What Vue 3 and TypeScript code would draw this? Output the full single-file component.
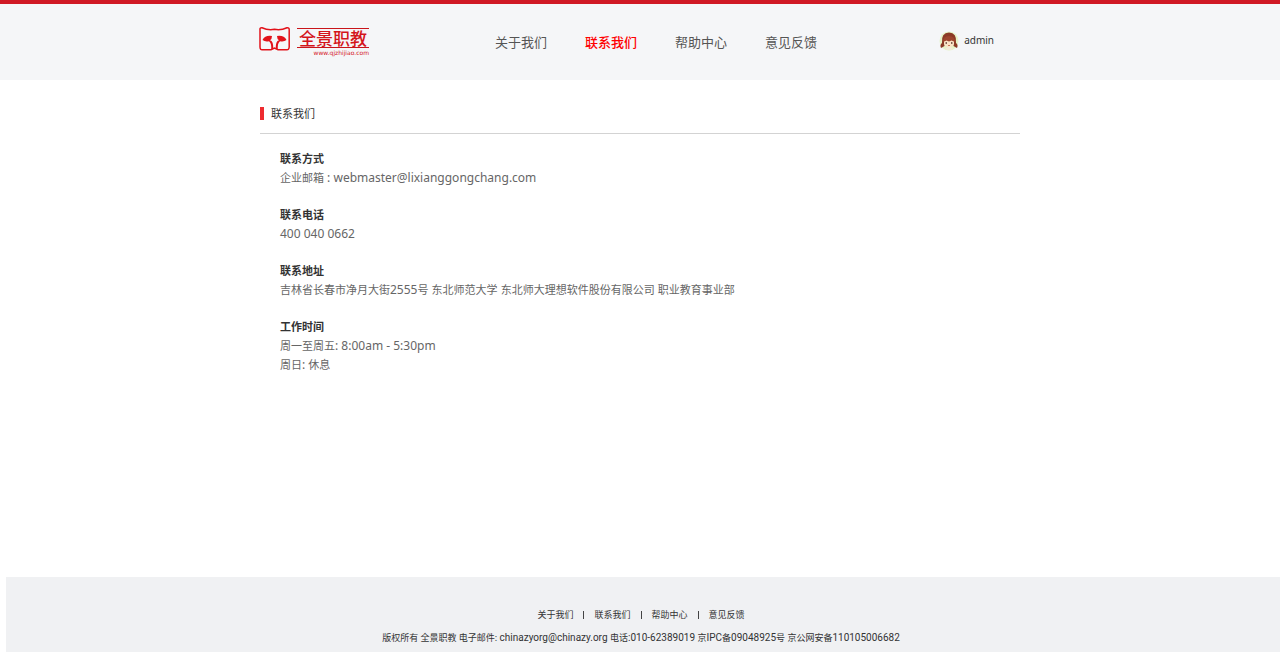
<script setup lang="ts">
interface NavLink {
  label: string
  href: string
  active?: boolean
}

interface Segment {
  text: string
  latin?: boolean
}

interface ContactBlock {
  title: string
  lines: Segment[][]
}

const links: NavLink[] = [
  { label: '关于我们', href: '#about' },
  { label: '联系我们', href: '#contact', active: true },
  { label: '帮助中心', href: '#help' },
  { label: '意见反馈', href: '#feedback' },
]

const blocks: ContactBlock[] = [
  {
    title: '联系方式',
    lines: [[{ text: '企业邮箱' }, { text: ' : webmaster@lixianggongchang.com', latin: true }]],
  },
  { title: '联系电话', lines: [[{ text: '400 040 0662', latin: true }]] },
  {
    title: '联系地址',
    lines: [
      [
        { text: '吉林省长春市净月大街' },
        { text: '2555', latin: true },
        { text: '号' },
        { text: ' ', latin: true },
        { text: '东北师范大学' },
        { text: ' ', latin: true },
        { text: '东北师大理想软件股份有限公司' },
        { text: ' ', latin: true },
        { text: '职业教育事业部' },
      ],
    ],
  },
  {
    title: '工作时间',
    lines: [
      [{ text: '周一至周五' }, { text: ': 8:00am - 5:30pm', latin: true }],
      [{ text: '周日' }, { text: ': ', latin: true }, { text: '休息' }],
    ],
  },
]

const legal: Segment[] = [
  { text: '版权所有 全景职教 电子邮件: ' },
  { text: 'chinazyorg@chinazy.org ', latin: true },
  { text: '电话' },
  { text: ':010-62389019 ', latin: true },
  { text: '京' },
  { text: 'IPC', latin: true },
  { text: '备' },
  { text: '09048925', latin: true },
  { text: '号 京公网安备' },
  { text: '110105006682', latin: true },
]
</script>

<template>
  <div class="page">
    <header class="header">
      <div class="wrap header-row">
        <a class="logo" href="#home" aria-label="全景职教">
          <svg width="114" height="34" viewBox="0 0 114 34">
            <path
              d="M2 5Q1.500 2.500 4 2.700Q10 5.500 16.500 4.300Q23 5.500 29 2.700Q31.500 2.500 31.200 5V22Q31 25 28.500 24.700H20L16.500 23L13 24.700H4.500Q2 25 2 22Z"
              fill="none" stroke="#e2121a" stroke-width="1.500"
            />
            <path
              d="M4.500 15Q7 10 14 11Q14 14 12 15.300Q15.500 16 15.300 24H13.300Q13.500 18 11 16.200Q7 17 4.500 15Z M28.500 15Q26 10 19 11Q19 14 21 15.300Q17.500 16 17.700 24H19.700Q19.500 18 22 16.200Q26 17 28.500 15Z"
              fill="#e2121a"
            />
            <path d="M39 3.500H111M39 22.500H111" stroke="#c9151b" />
            <text class="brand" x="41" y="20">全景职教</text>
            <text class="domain" x="111" y="30" text-anchor="end">www.qjzhijiao.com</text>
          </svg>
        </a>
        <nav class="nav">
          <a v-for="link in links" :key="link.href" :href="link.href" :class="{ active: link.active }">{{ link.label }}</a>
        </nav>
        <a class="user" href="#user">
          <svg width="20" height="20" viewBox="0 0 20 20" aria-hidden="true">
            <circle cx="10" cy="10" r="9.500" fill="#e5f3c8" />
            <path d="M3 12Q2 1.500 10 1.500Q18 1.500 17 12Q19.500 14 18 17L14.500 15V11H5.500V15L2 17Q0.500 14 3 12Z" fill="#8b3a26" />
            <path d="M5 9Q10 7 15 9V13Q14 16 10 16Q6 16 5 13Z" fill="#fbe3c6" />
            <path d="M4 11Q4 5 10 5Q16 5 16 11L12.500 9.500L10 10.500L7.500 9.500Z" fill="#9d452d" />
            <path d="M7.200 11V13M12.800 11V13" stroke="#4a2b20" />
            <path d="M6 18Q10 13 14 18Q10 20 6 18Z" fill="#f4ead8" />
            <path d="M9 14.500H11" stroke="#c67c5d" />
          </svg>
          <span>admin</span>
        </a>
      </div>
    </header>

    <main class="wrap main">
      <h1 class="title">联系我们</h1>
      <div class="content">
        <section v-for="block in blocks" :key="block.title">
          <h2>{{ block.title }}</h2>
          <p v-for="(line, i) in block.lines" :key="i">
            <span v-for="(part, j) in line" :key="j" :class="{ latin: part.latin }">{{ part.text }}</span>
          </p>
        </section>
      </div>
    </main>

    <footer class="footer">
      <nav class="footer-nav">
        <template v-for="(link, i) in links" :key="link.href">
          <i v-if="i > 0" class="divider"></i>
          <a :href="link.href">{{ link.label }}</a>
        </template>
      </nav>
      <p class="legal">
        <span v-for="(part, i) in legal" :key="i" :class="{ latin: part.latin }">{{ part.text }}</span>
      </p>
    </footer>
  </div>
</template>

<style>
body {
  margin: 0;
  background: #fff;
}
</style>

<style scoped>
.page {
  display: flex;
  flex-direction: column;
  min-height: 100vh;
  font-family: "Noto Sans", "Noto Sans CJK SC", sans-serif;
  color: #333;
}
a {
  color: inherit;
  text-decoration: none;
}
h1, h2, p {
  margin: 0;
}
.wrap {
  width: 100%;
  max-width: 760px;
  margin: 0 auto;
}
.header {
  border-top: 4px solid #d01925;
  background: #f5f6f8;
}
.header-row {
  display: flex;
  align-items: flex-start;
  height: 76px;
}
.logo {
  margin: 21px 0 0 -2px;
  height: 34px;
}
.logo svg {
  display: block;
}
.brand {
  font-family: "Noto Sans CJK SC", sans-serif;
  font-size: 17px;
  font-weight: 500;
  fill: #d4151b;
}
.domain {
  font-family: "DejaVu Sans", sans-serif;
  font-size: 6px;
  fill: #d4151b;
}
.nav {
  display: flex;
  gap: 38px;
  margin: 28px 0 0 123px;
  font-size: 13px;
  line-height: 20px;
  color: #555;
}
.nav .active {
  color: #f00;
  font-weight: 500;
}
.user {
  display: flex;
  align-items: center;
  gap: 5px;
  margin: 26px 26px 0 auto;
  font-size: 10px;
  line-height: 20px;
}
.user span {
  padding-bottom: 1px;
}
.main {
  flex: 1;
}
.title {
  display: flex;
  align-items: center;
  gap: 7px;
  padding: 24px 0 10px;
  border-bottom: 1px solid #d3d3d3;
  font-size: 11px;
  font-weight: 400;
  line-height: 19px;
}
.title::before {
  content: "";
  width: 4px;
  height: 13px;
  background: #ee2b30;
}
.content {
  display: flex;
  flex-direction: column;
  gap: 18px;
  padding: 15px 20px;
  font-size: 11px;
  line-height: 19px;
  color: #666;
}
.content h2 {
  font-size: 11px;
  line-height: 19px;
  color: #333;
}
.content .latin {
  font-size: 12px;
  line-height: 1;
}
.content p {
  white-space: pre-wrap;
}
.footer {
  margin-left: 6px;
  padding: 28px 4px 4px 0;
  background: #f0f1f3;
  text-align: center;
  font-size: 9px;
  line-height: 20px;
}
.footer-nav {
  display: flex;
  justify-content: center;
  align-items: center;
  gap: 10px;
}
.divider {
  width: 1px;
  height: 8px;
  background: #444;
}
.legal {
  margin-top: 3px;
  white-space: pre-wrap;
}
.legal .latin {
  font-family: Roboto, sans-serif;
  font-size: 10px;
  line-height: 1;
}
</style>
